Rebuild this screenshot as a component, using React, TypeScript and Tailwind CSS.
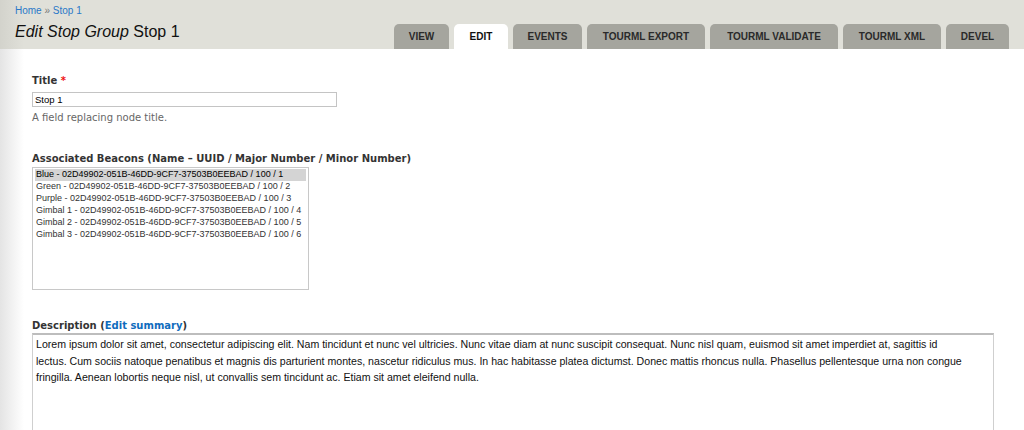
import React from "react";

const tabs = [
  { label: "VIEW", w: "w-[55px]" },
  { label: "EDIT", w: "w-[54px]", active: true },
  { label: "EVENTS", w: "w-[69px]" },
  { label: "TOURML EXPORT", w: "w-[118px]" },
  { label: "TOURML VALIDATE", w: "w-[128px]" },
  { label: "TOURML XML", w: "w-[98px]" },
  { label: "DEVEL", w: "w-[63px]" },
];

const beacons = [
  "Blue - 02D49902-051B-46DD-9CF7-37503B0EEBAD / 100 / 1",
  "Green - 02D49902-051B-46DD-9CF7-37503B0EEBAD / 100 / 2",
  "Purple - 02D49902-051B-46DD-9CF7-37503B0EEBAD / 100 / 3",
  "Gimbal 1 - 02D49902-051B-46DD-9CF7-37503B0EEBAD / 100 / 4",
  "Gimbal 2 - 02D49902-051B-46DD-9CF7-37503B0EEBAD / 100 / 5",
  "Gimbal 3 - 02D49902-051B-46DD-9CF7-37503B0EEBAD / 100 / 6",
];

const bodyLines = [
  "Lorem ipsum dolor sit amet, consectetur adipiscing elit. Nam tincidunt et nunc vel ultricies. Nunc vitae diam at nunc suscipit consequat. Nunc nisl quam, euismod sit amet imperdiet at, sagittis id",
  "lectus. Cum sociis natoque penatibus et magnis dis parturient montes, nascetur ridiculus mus. In hac habitasse platea dictumst. Donec mattis rhoncus nulla. Phasellus pellentesque urna non congue",
  "fringilla. Aenean lobortis neque nisl, ut convallis sem tincidunt ac. Etiam sit amet eleifend nulla.",
];

export default function App() {
  return (
    <div className="w-[1024px] h-[430px] overflow-hidden bg-[linear-gradient(to_right,#e4e4e4,#ffffff_24px)] font-['Liberation_Sans',Arial,sans-serif] text-[#333]">
      {/* Header */}
      <div className="h-[49px] flex justify-between bg-[linear-gradient(to_right,#d3d3cc,#e0e0d9_24px)]">
        <div className="pl-[15px] pt-[5px]">
          <div className="text-[10px] leading-[12px] text-[#2a78c8]">
            Home <span className="text-[#777]">»</span> Stop 1
          </div>
          <h1 className="mt-[6px] text-[16px] leading-[18px] text-[#111]">
            <em>Edit Stop Group</em> Stop 1
          </h1>
        </div>
        <div className="flex items-end gap-[5px] pr-[15px]">
          {tabs.map((t) => (
            <div
              key={t.label}
              className={`${t.w} h-[25px] rounded-t-[5px] flex items-center justify-center text-[10px] font-bold ${
                t.active ? "bg-white text-[#111]" : "bg-[#a5a59e] text-[#2a2a2a]"
              }`}
            >
              {t.label}
            </div>
          ))}
        </div>
      </div>

      {/* Form */}
      <div className="pl-[32px] pt-[25px]">
        <div className="font-['DejaVu_Sans',sans-serif] text-[10px] leading-[13px] font-bold">
          Title <span className="text-[#e11]">*</span>
        </div>
        <div className="mt-[5px] w-[305px] h-[15px] border border-[#c4c4c4] bg-white pl-[2px] text-[9.5px] leading-[13px] text-black">
          Stop 1
        </div>
        <div className="mt-[4px] font-['DejaVu_Sans',sans-serif] text-[10px] leading-[13px] text-[#666]">
          A field replacing node title.
        </div>

        <div className="mt-[28px] font-['DejaVu_Sans',sans-serif] text-[10px] leading-[13px] font-bold">
          Associated Beacons (Name – UUID / Major Number / Minor Number)
        </div>
        <div className="mt-[2px] w-[277px] h-[123px] border border-[#c8c8c8] bg-white px-[2px] pt-[1px]">
          {beacons.map((b, i) => (
            <div
              key={b}
              className={`h-[12px] pl-[1px] text-[9px] leading-[11px] whitespace-nowrap ${
                i === 0 ? "bg-[#d4d4d4] text-black" : "text-[#333]"
              }`}
            >
              {b}
            </div>
          ))}
        </div>

        <div className="mt-[29px] font-['DejaVu_Sans',sans-serif] text-[10px] leading-[13px] font-bold">
          Description (<span className="text-[#0f6cbd]">Edit summary</span>)
        </div>
        <div className="mt-[1px] w-[962px] h-[120px] border border-[#cfcfcf] border-t-[#bdbdbd] border-t-2 bg-white pl-[3px] pt-[1px] text-[10.6px] leading-[16.5px] text-[#111]">
          {bodyLines.map((l) => (
            <div key={l} className="whitespace-nowrap">
              {l}
            </div>
          ))}
        </div>
      </div>
    </div>
  );
}
